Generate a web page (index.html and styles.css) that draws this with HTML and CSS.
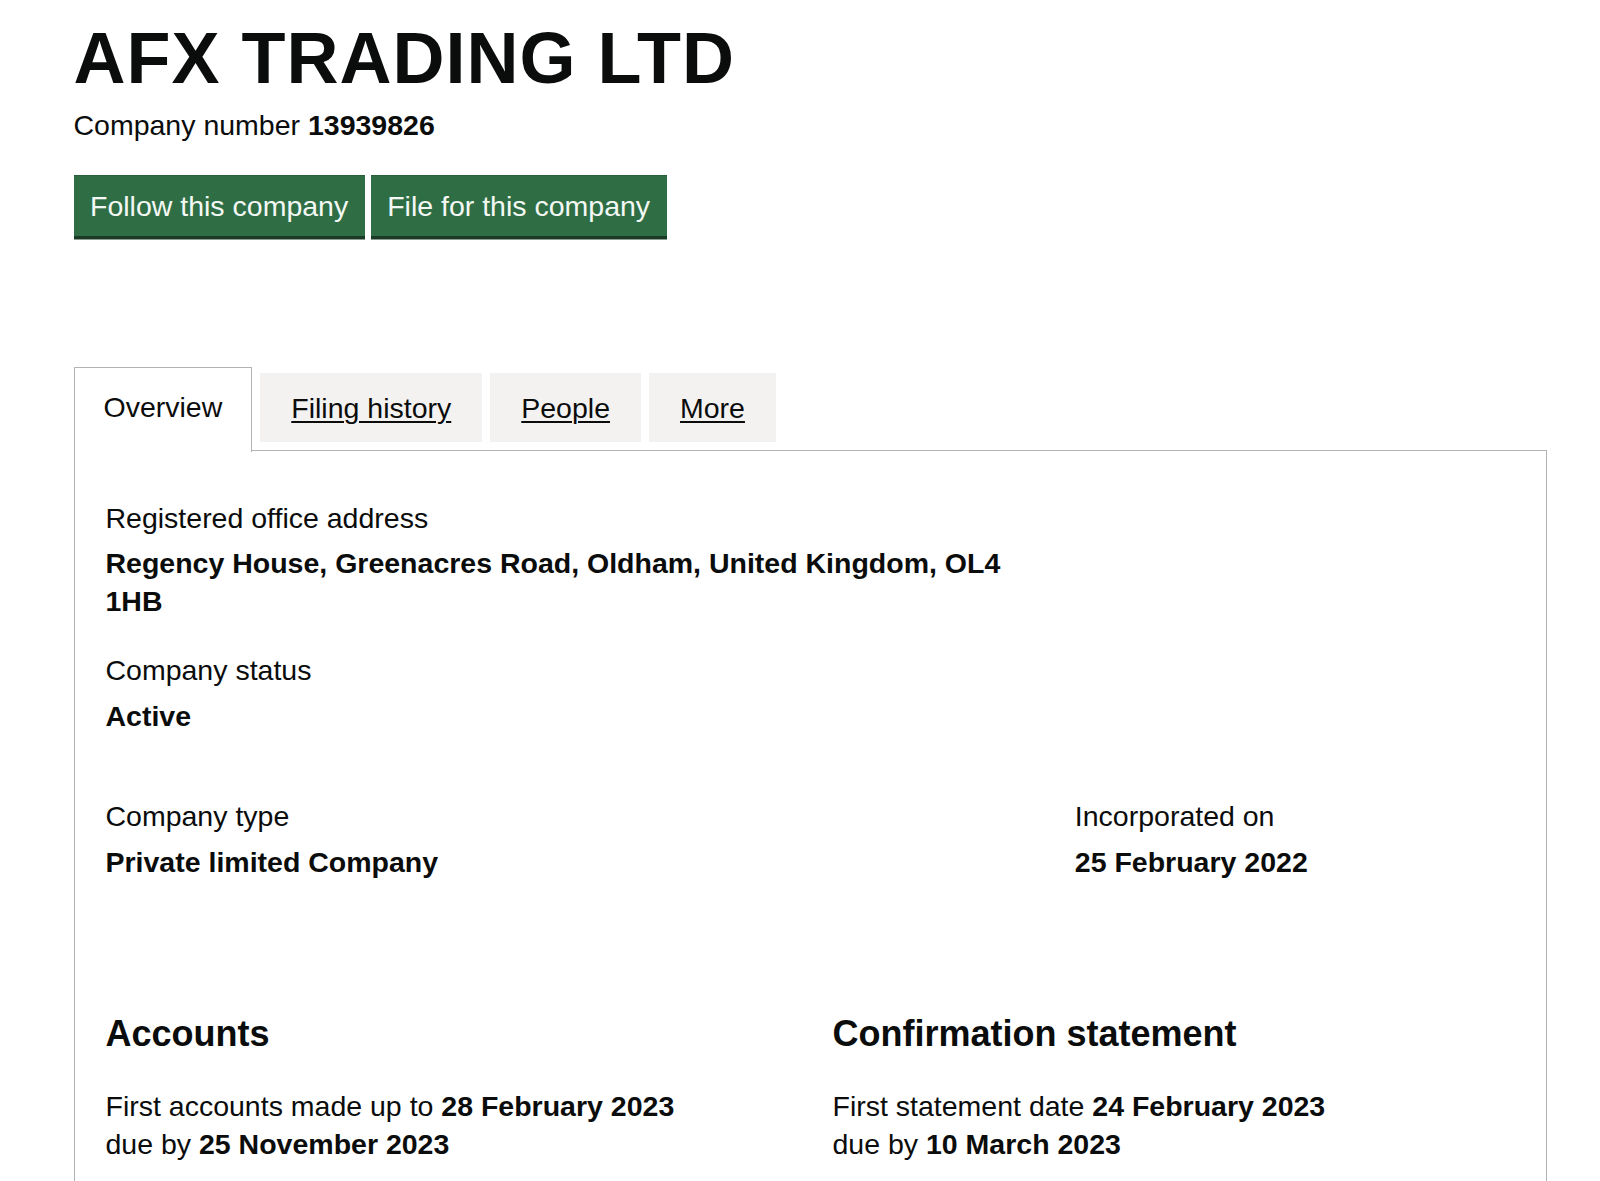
FILE: index.html
```html
<!DOCTYPE html>
<html lang="en">
<head>
<meta charset="utf-8">
<title>AFX TRADING LTD - Overview</title>
<link rel="stylesheet" href="styles.css">
</head>
<body>
<main class="page">
  <header class="company-header">
    <h1 class="company-name">AFX TRADING LTD</h1>
    <p class="company-number">Company number <strong>13939826</strong></p>
    <div class="actions">
      <a class="button" href="#">Follow this company</a>
      <a class="button" href="#">File for this company</a>
    </div>
  </header>

  <section class="tabs">
    <ul class="tab-list">
      <li class="tab tab-selected">Overview</li>
      <li class="tab"><a href="#">Filing history</a></li>
      <li class="tab"><a href="#">People</a></li>
      <li class="tab"><a href="#">More</a></li>
    </ul>
    <div class="tab-panel">
      <dl class="detail detail-address">
        <dt>Registered office address</dt>
        <dd class="address">Regency House, Greenacres Road, Oldham, United Kingdom, OL4 1HB</dd>
      </dl>
      <dl class="detail detail-status">
        <dt>Company status</dt>
        <dd>Active</dd>
      </dl>
      <div class="row row-thirds">
        <dl class="col detail">
          <dt>Company type</dt>
          <dd>Private limited Company</dd>
        </dl>
        <dl class="col detail">
          <dt>Incorporated on</dt>
          <dd>25 February 2022</dd>
        </dl>
      </div>
      <div class="row row-halves">
        <div class="col">
          <h2 class="section-heading">Accounts</h2>
          <p class="section-text">First accounts made up to <strong>28 February 2023</strong><br>due by <strong>25 November 2023</strong></p>
        </div>
        <div class="col">
          <h2 class="section-heading">Confirmation statement</h2>
          <p class="section-text">First statement date <strong>24 February 2023</strong><br>due by <strong>10 March 2023</strong></p>
        </div>
      </div>
    </div>
  </section>
</main>
</body>
</html>
```

FILE: styles.css
```css
html, body {
  margin: 0;
  padding: 0;
  background: #ffffff;
}

body {
  font-family: "Liberation Sans", Arial, sans-serif;
  color: #0b0c0c;
  font-size: 28.5px;
  line-height: 38px;
}

.page {
  margin-left: 73.5px;
  width: 1473px;
}

.company-name {
  margin: 22.3px 0 0;
  font-size: 72px;
  line-height: 72px;
  font-weight: 700;
  letter-spacing: 1px;
}

.company-number {
  margin: 11.8px 0 0;
}

.company-number strong {
  font-weight: 700;
}

.actions {
  display: flex;
  gap: 6px;
  margin-top: 31px;
}

.button {
  display: flex;
  align-items: center;
  height: 61px;
  padding: 0 16.5px;
  background: #2f6e45;
  color: #f4f8f4;
  text-decoration: none;
  box-shadow: 0 3.5px 0 #1b3a26;
  border-top: 1px solid #285f3b;
  box-sizing: border-box;
}

.tabs {
  margin-top: 137.3px;
}

.tab-list {
  display: flex;
  align-items: flex-start;
  gap: 8px;
  margin: 0;
  padding: 0;
  list-style: none;
}

.tab {
  padding: 15.5px 31px;
  background: #f3f2f1;
}

.tab a {
  color: #0b0c0c;
  text-decoration: underline;
  text-decoration-thickness: 1.5px;
  text-underline-offset: 3px;
}

.tab-selected {
  position: relative;
  z-index: 1;
  margin-top: -6px;
  margin-bottom: -1.5px;
  padding: 20px 29px 25.2px;
  background: #ffffff;
  border: 1.5px solid #b1b4b6;
  border-bottom: 0;
}

.tab-panel {
  border: 1.5px solid #b1b4b6;
  padding: 47.5px 31px 60px;
  min-height: 900px;
}

.detail {
  margin: 0;
}

.detail dt {
  margin: 0;
}

.detail dd {
  margin: 7.6px 0 0;
  font-weight: 700;
}

.address {
  max-width: 905px;
}

.detail-status {
  margin-top: 31.3px;
}

.row {
  display: grid;
  margin: 0 -22.5px;
}

.col {
  padding: 0 22.5px;
}

.row-thirds {
  grid-template-columns: 2fr 1fr;
  margin-top: 62.3px;
}

.row-halves {
  grid-template-columns: 1fr 1fr;
  margin-top: 130.3px;
}

.section-heading {
  margin: 0;
  font-size: 36px;
  line-height: 45px;
  font-weight: 700;
}

.section-text {
  margin: 31.2px 0 0;
}

.section-text strong {
  font-weight: 700;
}
```
